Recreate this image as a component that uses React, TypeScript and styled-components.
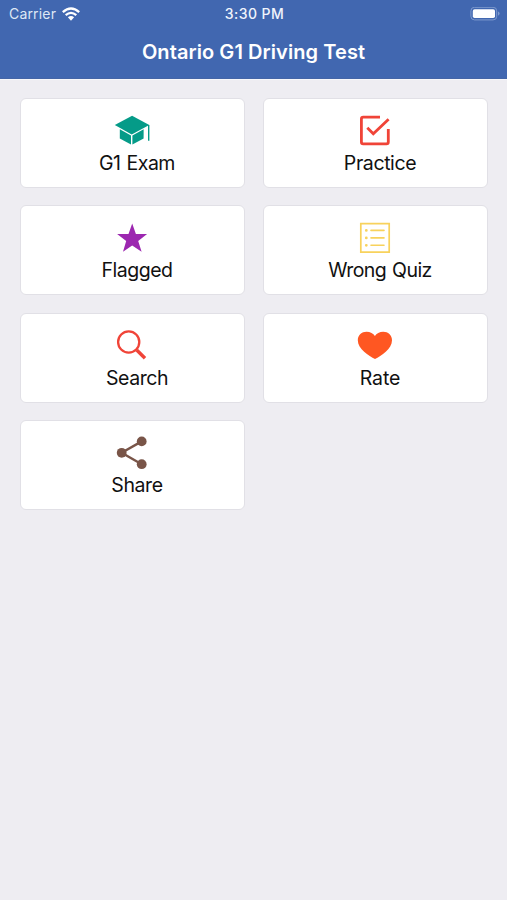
import React from "react";
import styled, { createGlobalStyle } from "styled-components";

const GlobalStyle = createGlobalStyle`
  * { box-sizing: border-box; }
  body { margin: 0; background: #eeedf2; font-family: Inter, "Liberation Sans", sans-serif; }
`;

const Screen = styled.main`
  width: 100%;
  max-width: 507px;
  height: 900px;
  overflow: hidden;
  background: #eeedf2;
`;

const Header = styled.header`
  height: 79px;
  background: #4167b0;
  border-bottom: 1px solid #4465a6;
  box-shadow: 0 1px 0 #f6f6fa;
  color: #fff;
`;

const StatusBar = styled.div`
  display: grid;
  grid-template-columns: 1fr auto 1fr;
  align-items: center;
  height: 27px;
  padding: 0 7px 0 9px;
  font-size: 14px;
  line-height: 27px;
`;

const Carrier = styled.div`
  display: flex;
  align-items: center;
  gap: 6px;
  color: #dfe7f5;
  letter-spacing: 0.18px;
`;

const Clock = styled.div`
  font-size: 14px;
  font-weight: 550;
  color: #f0f4fc;
  letter-spacing: 0.42px;
`;

const Battery = styled.div`
  display: flex;
  justify-content: flex-end;
`;

const Title = styled.h1`
  margin: 0;
  height: 50px;
  font-size: 20px;
  font-weight: 600;
  line-height: 50px;
  text-align: center;
  letter-spacing: 0.08px;
`;

const Menu = styled.nav`
  display: grid;
  grid-template-columns: 1fr 1fr;
  grid-auto-rows: 90px;
  gap: 17.5px 18px;
  padding: 18.5px 19px 0 20px;
`;

const Card = styled.button`
  display: flex;
  flex-direction: column;
  align-items: center;
  padding: 13px 0 0;
  border: 1px solid #e1e0e6;
  border-radius: 6px;
  background: #fff;
  font-family: inherit;
`;

const CardIcon = styled.svg`
  flex: none;
  width: 40px;
  height: 36px;
  margin-right: 2px;
`;

const Label = styled.span<{ $spacing: number }>`
  padding: 1px 0 0 9px;
  color: #111;
  font-size: 19.5px;
  line-height: 28px;
  letter-spacing: ${({ $spacing }) => $spacing}px;
  word-spacing: 1px;
  white-space: nowrap;
`;

const items: { label: string; spacing: number; icon: React.ReactNode }[] = [
  {
    label: "G1 Exam",
    spacing: -0.5,
    icon: (
      <g fill="#059b88">
        <path d="M20.1 3.7 37.3 13 19.7 22.5 2.8 13Z" />
        <path d="M7.8 17.2 19 23.6V32.4L7.8 26.6Z" />
        <path d="M31.6 17.2 20.4 23.6V32.4L31.6 26.6Z" />
        <path d="M36 13H37.4V28.7H36Z" />
      </g>
    ),
  },
  {
    label: "Practice",
    spacing: -0.4,
    icon: (
      <g fill="none" stroke="#f04438" strokeWidth="2.8">
        <path d="M25 5.1H8.2Q6.4 5.1 6.4 6.9V30.1Q6.4 31.9 8.2 31.9H31.5Q33.3 31.9 33.3 30.1V17" />
        <path d="M12.3 15.8 18.3 21.8 33.6 7.2" />
      </g>
    ),
  },
  {
    label: "Flagged",
    spacing: -0.5,
    icon: (
      <path
        fill="#9c27b0"
        d="M20.2 4.4 23.9 14.9 35.1 15.1 26.2 21.9 29.6 32.8 20.2 26.4 11 32.8 14.2 21.9 5.1 15.1 16.5 14.9Z"
      />
    ),
  },
  {
    label: "Wrong Quiz",
    spacing: -0.55,
    icon: (
      <g fill="none" stroke="#f8d25c">
        <path strokeWidth="1.7" d="M5.8 4.7H34.2V33.2H5.8Z" />
        <path strokeWidth="1.6" strokeLinecap="round" d="M16 11.4H29M16 18.9H29M16 26.3H29" />
        <path strokeWidth="2.8" strokeLinecap="round" d="M11.3 11.4h.01M11.3 18.9h.01M11.3 26.3h.01" />
      </g>
    ),
  },
  {
    label: "Search",
    spacing: -0.45,
    icon: (
      <g fill="none" stroke="#f04438">
        <circle cx="16.7" cy="15" r="10.6" strokeWidth="2.3" />
        <path strokeWidth="3.4" d="M24.7 23 33 31.3" />
      </g>
    ),
  },
  {
    label: "Rate",
    spacing: -0.1,
    icon: (
      <path
        fill="#ff5722"
        d="M20 32C14 28.6 2.8 22 2.8 13.2C2.8 8 6.8 4.8 11.5 4.8C15.3 4.8 18.3 6.4 19.9 9C21.5 6.4 24.5 4.8 28.3 4.8C33 4.8 37 8 37 13.2C37 22 26 28.6 20 32Z"
      />
    ),
  },
  {
    label: "Share",
    spacing: -0.4,
    icon: (
      <g fill="#795548">
        <path fill="none" stroke="#795548" strokeWidth="2.4" d="M29.7 7.4 9.7 18.8 29.7 30.2" />
        <circle cx="29.7" cy="7.4" r="4.9" />
        <circle cx="9.7" cy="18.8" r="4.9" />
        <circle cx="29.7" cy="30.2" r="4.9" />
      </g>
    ),
  },
];

export default function App() {
  return (
    <Screen>
      <GlobalStyle />
      <Header>
        <StatusBar>
          <Carrier>
            Carrier
            <svg width="18" height="14" viewBox="0 0 18 14" fill="none" stroke="#fff" strokeWidth="2.3">
              <path d="M.8 5.1Q9-2.2 17.2 5.1" />
              <path d="M3.7 8.2Q9 3.6 14.3 8.2" />
              <path fill="#fff" stroke="none" d="M5.9 10.3Q9 7.8 12.1 10.3L9 13.7Z" />
            </svg>
          </Carrier>
          <Clock>3:30 PM</Clock>
          <Battery>
            <svg width="30" height="14" viewBox="0 0 30 14">
              <rect x=".9" y=".3" width="25.8" height="12.6" rx="3.6" fill="none" stroke="#7f9bce" />
              <rect x="2.8" y="2.2" width="22.2" height="8.9" rx="1.8" fill="#fff" />
              <path d="M28 4.5Q29.6 5.1 29.6 6.6T28 8.7Z" fill="#7f9bce" />
            </svg>
          </Battery>
        </StatusBar>
        <Title>Ontario G1 Driving Test</Title>
      </Header>
      <Menu>
        {items.map(({ label, spacing, icon }) => (
          <Card key={label} type="button">
            <CardIcon viewBox="0 0 40 36" aria-hidden="true">
              {icon}
            </CardIcon>
            <Label $spacing={spacing}>{label}</Label>
          </Card>
        ))}
      </Menu>
    </Screen>
  );
}
